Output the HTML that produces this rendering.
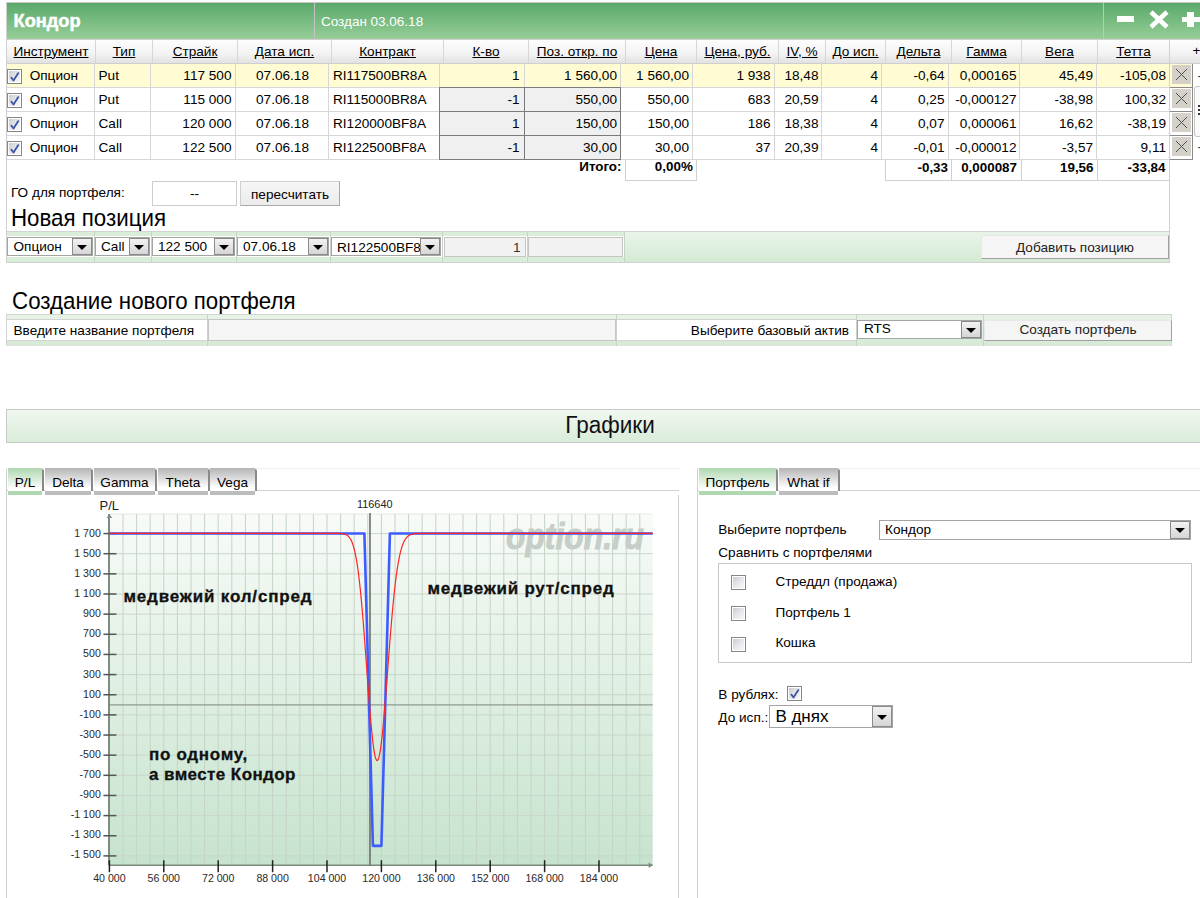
<!DOCTYPE html>
<html><head><meta charset="utf-8"><style>
html,body{margin:0;padding:0;background:#fff;width:1200px;height:898px;overflow:hidden}
body{position:relative;font-family:"Liberation Sans",sans-serif;color:#000}
.t{position:absolute;white-space:nowrap}
.b{position:absolute}
.cb{border:1px solid #858686;background:#fff;}
.cbi{position:absolute;left:1px;top:1px;width:11px;height:11px;background:linear-gradient(135deg,#c9ccd3,#e6e7ea 50%,#f7f7f7)}
.ddb{border:1px solid #8a8a8a;background:linear-gradient(#f2f2f2,#d6d6d6)}
.tri{position:absolute;left:50%;top:50%;margin-left:-5px;margin-top:-2px;width:0;height:0;border-left:5px solid transparent;border-right:5px solid transparent;border-top:5px solid #000}
svg text{font-family:"Liberation Sans",sans-serif}
</style></head><body>
<div class="b" style="left:6px;top:2px;width:1194px;height:1px;background:#c8c8c8"></div>
<div class="b" style="left:6px;top:2px;width:1px;height:261px;background:#d0d0d0"></div>
<div class="b" style="left:7px;top:3px;width:1193px;height:36px;background:linear-gradient(#5aa96b,#96ce97)"></div>
<div class="b" style="left:314px;top:3px;width:1px;height:36px;background:#c4c4c4"></div>
<div class="b" style="left:1103px;top:3px;width:1px;height:36px;background:#c4c4c4"></div>
<div class="t" style="left:13.6px;top:11.19px;font-size:18.2px;line-height:20px;font-weight:bold;color:#fff;-webkit-text-stroke:0.5px #fff">Кондор</div>
<div class="t" style="left:321px;top:11.72px;font-size:13.5px;line-height:20px;font-weight:normal;color:#fff;">Создан 03.06.18</div>
<div class="b" style="left:1117px;top:16px;width:17px;height:6px;background:#fff"></div>
<svg class="b" style="left:1148px;top:9px" width="22" height="21" viewBox="0 0 22 21"><path d="M3 3 L19 18 M19 3 L3 18" stroke="#fff" stroke-width="4.6"/></svg>
<div class="b" style="left:1182px;top:16.5px;width:18px;height:5.5px;background:#fff"></div>
<div class="b" style="left:1187px;top:12px;width:7px;height:15px;background:#fff"></div>
<div class="b" style="left:7px;top:39px;width:1193px;height:24px;background:linear-gradient(#fefefe,#f3f3f3 60%,#e2e2e2)"></div>
<div class="b" style="left:7px;top:39px;width:1193px;height:1px;background:#d2ced2"></div>
<div class="b" style="left:7px;top:63px;width:1193px;height:1px;background:#cfcfcf"></div>
<div class="b" style="left:95px;top:39px;width:1px;height:24px;background:#d6d6d6"></div>
<div class="b" style="left:152px;top:39px;width:1px;height:24px;background:#d6d6d6"></div>
<div class="b" style="left:237px;top:39px;width:1px;height:24px;background:#d6d6d6"></div>
<div class="b" style="left:331px;top:39px;width:1px;height:24px;background:#d6d6d6"></div>
<div class="b" style="left:443px;top:39px;width:1px;height:24px;background:#d6d6d6"></div>
<div class="b" style="left:528px;top:39px;width:1px;height:24px;background:#d6d6d6"></div>
<div class="b" style="left:625px;top:39px;width:1px;height:24px;background:#d6d6d6"></div>
<div class="b" style="left:696px;top:39px;width:1px;height:24px;background:#d6d6d6"></div>
<div class="b" style="left:778px;top:39px;width:1px;height:24px;background:#d6d6d6"></div>
<div class="b" style="left:825px;top:39px;width:1px;height:24px;background:#d6d6d6"></div>
<div class="b" style="left:885px;top:39px;width:1px;height:24px;background:#d6d6d6"></div>
<div class="b" style="left:951px;top:39px;width:1px;height:24px;background:#d6d6d6"></div>
<div class="b" style="left:1021px;top:39px;width:1px;height:24px;background:#d6d6d6"></div>
<div class="b" style="left:1097px;top:39px;width:1px;height:24px;background:#d6d6d6"></div>
<div class="b" style="left:1169px;top:39px;width:1px;height:24px;background:#d6d6d6"></div>
<div class="t" style="left:-249.0px;width:600px;text-align:center;top:41.79px;font-size:13.6px;line-height:20px;font-weight:normal;color:#000;text-decoration:underline;text-underline-offset:0.6px">Инструмент</div>
<div class="t" style="left:-176.0px;width:600px;text-align:center;top:41.79px;font-size:13.6px;line-height:20px;font-weight:normal;color:#000;text-decoration:underline;text-underline-offset:0.6px">Тип</div>
<div class="t" style="left:-105.0px;width:600px;text-align:center;top:41.79px;font-size:13.6px;line-height:20px;font-weight:normal;color:#000;text-decoration:underline;text-underline-offset:0.6px">Страйк</div>
<div class="t" style="left:-15.5px;width:600px;text-align:center;top:41.79px;font-size:13.6px;line-height:20px;font-weight:normal;color:#000;text-decoration:underline;text-underline-offset:0.6px">Дата исп.</div>
<div class="t" style="left:87.5px;width:600px;text-align:center;top:41.79px;font-size:13.6px;line-height:20px;font-weight:normal;color:#000;text-decoration:underline;text-underline-offset:0.6px">Контракт</div>
<div class="t" style="left:186.0px;width:600px;text-align:center;top:41.79px;font-size:13.6px;line-height:20px;font-weight:normal;color:#000;text-decoration:underline;text-underline-offset:0.6px">К-во</div>
<div class="t" style="left:277.0px;width:600px;text-align:center;top:41.79px;font-size:13.6px;line-height:20px;font-weight:normal;color:#000;text-decoration:underline;text-underline-offset:0.6px">Поз. откр. по</div>
<div class="t" style="left:361.0px;width:600px;text-align:center;top:41.79px;font-size:13.6px;line-height:20px;font-weight:normal;color:#000;text-decoration:underline;text-underline-offset:0.6px">Цена</div>
<div class="t" style="left:437.5px;width:600px;text-align:center;top:41.79px;font-size:13.6px;line-height:20px;font-weight:normal;color:#000;text-decoration:underline;text-underline-offset:0.6px">Цена, руб.</div>
<div class="t" style="left:502.0px;width:600px;text-align:center;top:41.79px;font-size:13.6px;line-height:20px;font-weight:normal;color:#000;text-decoration:underline;text-underline-offset:0.6px">IV, %</div>
<div class="t" style="left:555.5px;width:600px;text-align:center;top:41.79px;font-size:13.6px;line-height:20px;font-weight:normal;color:#000;text-decoration:underline;text-underline-offset:0.6px">До исп.</div>
<div class="t" style="left:618.5px;width:600px;text-align:center;top:41.79px;font-size:13.6px;line-height:20px;font-weight:normal;color:#000;text-decoration:underline;text-underline-offset:0.6px">Дельта</div>
<div class="t" style="left:686.5px;width:600px;text-align:center;top:41.79px;font-size:13.6px;line-height:20px;font-weight:normal;color:#000;text-decoration:underline;text-underline-offset:0.6px">Гамма</div>
<div class="t" style="left:759.5px;width:600px;text-align:center;top:41.79px;font-size:13.6px;line-height:20px;font-weight:normal;color:#000;text-decoration:underline;text-underline-offset:0.6px">Вега</div>
<div class="t" style="left:833.5px;width:600px;text-align:center;top:41.79px;font-size:13.6px;line-height:20px;font-weight:normal;color:#000;text-decoration:underline;text-underline-offset:0.6px">Тетта</div>
<div class="t" style="left:1192.5px;top:41.29px;font-size:13.6px;line-height:20px;font-weight:normal;color:#000;">+</div>
<div class="b" style="left:7px;top:64px;width:1185px;height:23px;background:#fffbd3"></div>
<div class="b cb" style="left:7px;top:69px;width:13px;height:13px"><div class="cbi"></div><svg width="15" height="15" viewBox="0 0 15 15" style="position:absolute;left:-1px;top:-1px"><path d="M4.4 8.6 L6.5 11.5 L11.3 4.1" stroke="#3d56a3" stroke-width="1.8" fill="none" stroke-linecap="round" stroke-linejoin="round"/></svg></div>
<div class="t" style="left:29.7px;top:65.89px;font-size:13.6px;line-height:20px;font-weight:normal;color:#000;">Опцион</div>
<div class="t" style="left:98.5px;top:65.89px;font-size:13.6px;line-height:20px;font-weight:normal;color:#000;">Put</div>
<div class="t" style="right:968.5px;text-align:right;top:65.89px;font-size:13.6px;line-height:20px;font-weight:normal;color:#000;">117 500</div>
<div class="t" style="left:-17.5px;width:600px;text-align:center;top:65.89px;font-size:13.6px;line-height:20px;font-weight:normal;color:#000;">07.06.18</div>
<div class="t" style="left:333px;top:65.89px;font-size:13.6px;line-height:20px;font-weight:normal;color:#000;">RI117500BR8A</div>
<div class="t" style="right:680.5px;text-align:right;top:65.89px;font-size:13.6px;line-height:20px;font-weight:normal;color:#000;">1</div>
<div class="t" style="right:583px;text-align:right;top:65.89px;font-size:13.6px;line-height:20px;font-weight:normal;color:#000;">1 560,00</div>
<div class="t" style="right:511px;text-align:right;top:65.89px;font-size:13.6px;line-height:20px;font-weight:normal;color:#000;">1 560,00</div>
<div class="t" style="right:429.5px;text-align:right;top:65.89px;font-size:13.6px;line-height:20px;font-weight:normal;color:#000;">1 938</div>
<div class="t" style="right:381.5px;text-align:right;top:65.89px;font-size:13.6px;line-height:20px;font-weight:normal;color:#000;">18,48</div>
<div class="t" style="right:322px;text-align:right;top:65.89px;font-size:13.6px;line-height:20px;font-weight:normal;color:#000;">4</div>
<div class="t" style="right:255.5px;text-align:right;top:65.89px;font-size:13.6px;line-height:20px;font-weight:normal;color:#000;">-0,64</div>
<div class="t" style="right:183.5px;text-align:right;top:65.89px;font-size:13.6px;line-height:20px;font-weight:normal;color:#000;">0,000165</div>
<div class="t" style="right:107px;text-align:right;top:65.89px;font-size:13.6px;line-height:20px;font-weight:normal;color:#000;">45,49</div>
<div class="t" style="right:34px;text-align:right;top:65.89px;font-size:13.6px;line-height:20px;font-weight:normal;color:#000;">-105,08</div>
<div class="b" style="left:1172px;top:65px;width:19px;height:19px;background:#d5d1c9"></div>
<svg class="b" style="left:1172px;top:65px" width="19" height="19" viewBox="0 0 19 19"><path d="M4 4 L15 15 M15 4 L4 15" stroke="#505050" stroke-width="1"/></svg>
<div class="b" style="left:7px;top:88px;width:1185px;height:23px;background:#fff"></div>
<div class="b" style="left:439px;top:87px;width:182px;height:25px;background:#f0f0f0"></div>
<div class="b cb" style="left:7px;top:93px;width:13px;height:13px"><div class="cbi"></div><svg width="15" height="15" viewBox="0 0 15 15" style="position:absolute;left:-1px;top:-1px"><path d="M4.4 8.6 L6.5 11.5 L11.3 4.1" stroke="#3d56a3" stroke-width="1.8" fill="none" stroke-linecap="round" stroke-linejoin="round"/></svg></div>
<div class="t" style="left:29.7px;top:89.89px;font-size:13.6px;line-height:20px;font-weight:normal;color:#000;">Опцион</div>
<div class="t" style="left:98.5px;top:89.89px;font-size:13.6px;line-height:20px;font-weight:normal;color:#000;">Put</div>
<div class="t" style="right:968.5px;text-align:right;top:89.89px;font-size:13.6px;line-height:20px;font-weight:normal;color:#000;">115 000</div>
<div class="t" style="left:-17.5px;width:600px;text-align:center;top:89.89px;font-size:13.6px;line-height:20px;font-weight:normal;color:#000;">07.06.18</div>
<div class="t" style="left:333px;top:89.89px;font-size:13.6px;line-height:20px;font-weight:normal;color:#000;">RI115000BR8A</div>
<div class="t" style="right:680.5px;text-align:right;top:89.89px;font-size:13.6px;line-height:20px;font-weight:normal;color:#000;">-1</div>
<div class="t" style="right:583px;text-align:right;top:89.89px;font-size:13.6px;line-height:20px;font-weight:normal;color:#000;">550,00</div>
<div class="t" style="right:511px;text-align:right;top:89.89px;font-size:13.6px;line-height:20px;font-weight:normal;color:#000;">550,00</div>
<div class="t" style="right:429.5px;text-align:right;top:89.89px;font-size:13.6px;line-height:20px;font-weight:normal;color:#000;">683</div>
<div class="t" style="right:381.5px;text-align:right;top:89.89px;font-size:13.6px;line-height:20px;font-weight:normal;color:#000;">20,59</div>
<div class="t" style="right:322px;text-align:right;top:89.89px;font-size:13.6px;line-height:20px;font-weight:normal;color:#000;">4</div>
<div class="t" style="right:255.5px;text-align:right;top:89.89px;font-size:13.6px;line-height:20px;font-weight:normal;color:#000;">0,25</div>
<div class="t" style="right:183.5px;text-align:right;top:89.89px;font-size:13.6px;line-height:20px;font-weight:normal;color:#000;">-0,000127</div>
<div class="t" style="right:107px;text-align:right;top:89.89px;font-size:13.6px;line-height:20px;font-weight:normal;color:#000;">-38,98</div>
<div class="t" style="right:34px;text-align:right;top:89.89px;font-size:13.6px;line-height:20px;font-weight:normal;color:#000;">100,32</div>
<div class="b" style="left:1172px;top:89px;width:19px;height:19px;background:#d5d1c9"></div>
<svg class="b" style="left:1172px;top:89px" width="19" height="19" viewBox="0 0 19 19"><path d="M4 4 L15 15 M15 4 L4 15" stroke="#505050" stroke-width="1"/></svg>
<div class="b" style="left:7px;top:112px;width:1185px;height:23px;background:#fff"></div>
<div class="b" style="left:439px;top:111px;width:182px;height:25px;background:#f0f0f0"></div>
<div class="b cb" style="left:7px;top:117px;width:13px;height:13px"><div class="cbi"></div><svg width="15" height="15" viewBox="0 0 15 15" style="position:absolute;left:-1px;top:-1px"><path d="M4.4 8.6 L6.5 11.5 L11.3 4.1" stroke="#3d56a3" stroke-width="1.8" fill="none" stroke-linecap="round" stroke-linejoin="round"/></svg></div>
<div class="t" style="left:29.7px;top:113.89px;font-size:13.6px;line-height:20px;font-weight:normal;color:#000;">Опцион</div>
<div class="t" style="left:98.5px;top:113.89px;font-size:13.6px;line-height:20px;font-weight:normal;color:#000;">Call</div>
<div class="t" style="right:968.5px;text-align:right;top:113.89px;font-size:13.6px;line-height:20px;font-weight:normal;color:#000;">120 000</div>
<div class="t" style="left:-17.5px;width:600px;text-align:center;top:113.89px;font-size:13.6px;line-height:20px;font-weight:normal;color:#000;">07.06.18</div>
<div class="t" style="left:333px;top:113.89px;font-size:13.6px;line-height:20px;font-weight:normal;color:#000;">RI120000BF8A</div>
<div class="t" style="right:680.5px;text-align:right;top:113.89px;font-size:13.6px;line-height:20px;font-weight:normal;color:#000;">1</div>
<div class="t" style="right:583px;text-align:right;top:113.89px;font-size:13.6px;line-height:20px;font-weight:normal;color:#000;">150,00</div>
<div class="t" style="right:511px;text-align:right;top:113.89px;font-size:13.6px;line-height:20px;font-weight:normal;color:#000;">150,00</div>
<div class="t" style="right:429.5px;text-align:right;top:113.89px;font-size:13.6px;line-height:20px;font-weight:normal;color:#000;">186</div>
<div class="t" style="right:381.5px;text-align:right;top:113.89px;font-size:13.6px;line-height:20px;font-weight:normal;color:#000;">18,38</div>
<div class="t" style="right:322px;text-align:right;top:113.89px;font-size:13.6px;line-height:20px;font-weight:normal;color:#000;">4</div>
<div class="t" style="right:255.5px;text-align:right;top:113.89px;font-size:13.6px;line-height:20px;font-weight:normal;color:#000;">0,07</div>
<div class="t" style="right:183.5px;text-align:right;top:113.89px;font-size:13.6px;line-height:20px;font-weight:normal;color:#000;">0,000061</div>
<div class="t" style="right:107px;text-align:right;top:113.89px;font-size:13.6px;line-height:20px;font-weight:normal;color:#000;">16,62</div>
<div class="t" style="right:34px;text-align:right;top:113.89px;font-size:13.6px;line-height:20px;font-weight:normal;color:#000;">-38,19</div>
<div class="b" style="left:1172px;top:113px;width:19px;height:19px;background:#d5d1c9"></div>
<svg class="b" style="left:1172px;top:113px" width="19" height="19" viewBox="0 0 19 19"><path d="M4 4 L15 15 M15 4 L4 15" stroke="#505050" stroke-width="1"/></svg>
<div class="b" style="left:7px;top:136px;width:1185px;height:23px;background:#fff"></div>
<div class="b" style="left:439px;top:135px;width:182px;height:25px;background:#f0f0f0"></div>
<div class="b cb" style="left:7px;top:141px;width:13px;height:13px"><div class="cbi"></div><svg width="15" height="15" viewBox="0 0 15 15" style="position:absolute;left:-1px;top:-1px"><path d="M4.4 8.6 L6.5 11.5 L11.3 4.1" stroke="#3d56a3" stroke-width="1.8" fill="none" stroke-linecap="round" stroke-linejoin="round"/></svg></div>
<div class="t" style="left:29.7px;top:137.89px;font-size:13.6px;line-height:20px;font-weight:normal;color:#000;">Опцион</div>
<div class="t" style="left:98.5px;top:137.89px;font-size:13.6px;line-height:20px;font-weight:normal;color:#000;">Call</div>
<div class="t" style="right:968.5px;text-align:right;top:137.89px;font-size:13.6px;line-height:20px;font-weight:normal;color:#000;">122 500</div>
<div class="t" style="left:-17.5px;width:600px;text-align:center;top:137.89px;font-size:13.6px;line-height:20px;font-weight:normal;color:#000;">07.06.18</div>
<div class="t" style="left:333px;top:137.89px;font-size:13.6px;line-height:20px;font-weight:normal;color:#000;">RI122500BF8A</div>
<div class="t" style="right:680.5px;text-align:right;top:137.89px;font-size:13.6px;line-height:20px;font-weight:normal;color:#000;">-1</div>
<div class="t" style="right:583px;text-align:right;top:137.89px;font-size:13.6px;line-height:20px;font-weight:normal;color:#000;">30,00</div>
<div class="t" style="right:511px;text-align:right;top:137.89px;font-size:13.6px;line-height:20px;font-weight:normal;color:#000;">30,00</div>
<div class="t" style="right:429.5px;text-align:right;top:137.89px;font-size:13.6px;line-height:20px;font-weight:normal;color:#000;">37</div>
<div class="t" style="right:381.5px;text-align:right;top:137.89px;font-size:13.6px;line-height:20px;font-weight:normal;color:#000;">20,39</div>
<div class="t" style="right:322px;text-align:right;top:137.89px;font-size:13.6px;line-height:20px;font-weight:normal;color:#000;">4</div>
<div class="t" style="right:255.5px;text-align:right;top:137.89px;font-size:13.6px;line-height:20px;font-weight:normal;color:#000;">-0,01</div>
<div class="t" style="right:183.5px;text-align:right;top:137.89px;font-size:13.6px;line-height:20px;font-weight:normal;color:#000;">-0,000012</div>
<div class="t" style="right:107px;text-align:right;top:137.89px;font-size:13.6px;line-height:20px;font-weight:normal;color:#000;">-3,57</div>
<div class="t" style="right:34px;text-align:right;top:137.89px;font-size:13.6px;line-height:20px;font-weight:normal;color:#000;">9,11</div>
<div class="b" style="left:1172px;top:137px;width:19px;height:19px;background:#d5d1c9"></div>
<svg class="b" style="left:1172px;top:137px" width="19" height="19" viewBox="0 0 19 19"><path d="M4 4 L15 15 M15 4 L4 15" stroke="#505050" stroke-width="1"/></svg>
<div class="b" style="left:7px;top:87px;width:1185px;height:1px;background:#d6d6d6"></div>
<div class="b" style="left:7px;top:111px;width:1185px;height:1px;background:#d6d6d6"></div>
<div class="b" style="left:7px;top:135px;width:1185px;height:1px;background:#d6d6d6"></div>
<div class="b" style="left:7px;top:159px;width:1185px;height:1px;background:#d6d6d6"></div>
<div class="b" style="left:94px;top:64px;width:1px;height:95px;background:#d6d6d6"></div>
<div class="b" style="left:150px;top:64px;width:1px;height:95px;background:#d6d6d6"></div>
<div class="b" style="left:235px;top:64px;width:1px;height:95px;background:#d6d6d6"></div>
<div class="b" style="left:328px;top:64px;width:1px;height:95px;background:#d6d6d6"></div>
<div class="b" style="left:439px;top:64px;width:1px;height:95px;background:#d6d6d6"></div>
<div class="b" style="left:524px;top:64px;width:1px;height:95px;background:#d6d6d6"></div>
<div class="b" style="left:620px;top:64px;width:1px;height:95px;background:#d6d6d6"></div>
<div class="b" style="left:692px;top:64px;width:1px;height:95px;background:#d6d6d6"></div>
<div class="b" style="left:774px;top:64px;width:1px;height:95px;background:#d6d6d6"></div>
<div class="b" style="left:821px;top:64px;width:1px;height:95px;background:#d6d6d6"></div>
<div class="b" style="left:881px;top:64px;width:1px;height:95px;background:#d6d6d6"></div>
<div class="b" style="left:948px;top:64px;width:1px;height:95px;background:#d6d6d6"></div>
<div class="b" style="left:1019px;top:64px;width:1px;height:95px;background:#d6d6d6"></div>
<div class="b" style="left:1096px;top:64px;width:1px;height:95px;background:#d6d6d6"></div>
<div class="b" style="left:1169px;top:64px;width:1px;height:95px;background:#d6d6d6"></div>
<div class="b" style="left:1192px;top:64px;width:1px;height:95px;background:#d6d6d6"></div>
<div class="b" style="left:439px;top:87px;width:182px;height:1px;background:#7a7a7a"></div>
<div class="b" style="left:439px;top:111px;width:182px;height:1px;background:#7a7a7a"></div>
<div class="b" style="left:439px;top:135px;width:182px;height:1px;background:#7a7a7a"></div>
<div class="b" style="left:439px;top:159px;width:182px;height:1px;background:#7a7a7a"></div>
<div class="b" style="left:439px;top:87px;width:1px;height:73px;background:#7a7a7a"></div>
<div class="b" style="left:524px;top:87px;width:1px;height:73px;background:#7a7a7a"></div>
<div class="b" style="left:620px;top:87px;width:1px;height:73px;background:#7a7a7a"></div>
<div class="b" style="left:1192px;top:64px;width:1px;height:96px;background:#8a8a8a"></div>
<div class="b" style="left:1169px;top:87px;width:24px;height:1px;background:#8a8a8a"></div>
<div class="b" style="left:1169px;top:111px;width:24px;height:1px;background:#8a8a8a"></div>
<div class="b" style="left:1169px;top:135px;width:24px;height:1px;background:#8a8a8a"></div>
<div class="b" style="left:1169px;top:159px;width:24px;height:1px;background:#8a8a8a"></div>
<div class="t" style="left:1197.5px;top:66.09px;font-size:13.6px;line-height:20px;font-weight:normal;color:#333;">-</div>
<div class="b" style="left:1194px;top:86px;width:8px;height:51px;border:1px solid #c4c4c4;border-radius:3px;background:#fafafa;box-sizing:border-box"></div>
<div class="b" style="left:1198px;top:105px;width:2px;height:2px;background:#333"></div>
<div class="b" style="left:1198px;top:109px;width:2px;height:2px;background:#333"></div>
<div class="b" style="left:1198px;top:113px;width:2px;height:2px;background:#333"></div>
<div class="t" style="left:1197.5px;top:136.59px;font-size:13.6px;line-height:20px;font-weight:normal;color:#333;">-</div>
<div class="t" style="right:578.5px;text-align:right;top:157.36px;font-size:13.4px;line-height:20px;font-weight:bold;color:#000;">Итого:</div>
<div class="b" style="left:625px;top:159px;width:72px;height:22px;border:1px solid #d0d0d0;border-top:none;box-sizing:border-box"></div>
<div class="t" style="right:507.20000000000005px;text-align:right;top:157.36px;font-size:13.4px;line-height:20px;font-weight:bold;color:#000;">0,00%</div>
<div class="b" style="left:885px;top:159px;width:285px;height:22px;border:1px solid #d0d0d0;border-top:none;box-sizing:border-box"></div>
<div class="b" style="left:951px;top:159px;width:1px;height:22px;background:#d0d0d0"></div>
<div class="b" style="left:1021px;top:159px;width:1px;height:22px;background:#d0d0d0"></div>
<div class="b" style="left:1097px;top:159px;width:1px;height:22px;background:#d0d0d0"></div>
<div class="t" style="right:252px;text-align:right;top:157.86px;font-size:13.4px;line-height:20px;font-weight:bold;color:#000;">-0,33</div>
<div class="t" style="right:183px;text-align:right;top:157.86px;font-size:13.4px;line-height:20px;font-weight:bold;color:#000;">0,000087</div>
<div class="t" style="right:106.5px;text-align:right;top:157.86px;font-size:13.4px;line-height:20px;font-weight:bold;color:#000;">19,56</div>
<div class="t" style="right:34.5px;text-align:right;top:157.86px;font-size:13.4px;line-height:20px;font-weight:bold;color:#000;">-33,84</div>
<div class="b" style="left:1169px;top:39px;width:1px;height:224px;background:#d0d0d0"></div>
<div class="t" style="left:11px;top:183.29px;font-size:13.6px;line-height:20px;font-weight:normal;color:#000;">ГО для портфеля:</div>
<div class="b" style="left:152px;top:181px;width:85px;height:25px;border:1px solid #cdcdcd;background:#fff;box-sizing:border-box"></div>
<div class="t" style="left:-105.5px;width:600px;text-align:center;top:183.99px;font-size:13.6px;line-height:20px;font-weight:normal;color:#000;">--</div>
<div class="b" style="left:240px;top:181px;width:100px;height:25px;border:1px solid #cfcfcf;border-right-color:#a8a8a8;border-bottom-color:#a8a8a8;background:linear-gradient(#f6f6f6,#ececec);box-sizing:border-box"></div>
<div class="t" style="left:-10px;width:600px;text-align:center;top:185.29px;font-size:13.6px;line-height:20px;font-weight:normal;color:#000;">пересчитать</div>
<div class="t" style="left:11px;top:209.27px;font-size:22.3px;line-height:20px;font-weight:normal;color:#000;transform:scaleY(1.07);transform-origin:0 17.7px">Новая позиция</div>
<div class="b" style="left:7px;top:231px;width:1162px;height:31px;background:#d9edd9"></div>
<div class="b" style="left:7px;top:231px;width:1162px;height:1px;background:#d2d4d2"></div>
<div class="b" style="left:6px;top:262px;width:1163px;height:1px;background:#d0d0d0"></div>
<div class="b" style="left:7px;top:236px;width:617px;height:21px;background:#fff"></div>
<div class="b" style="left:94px;top:231px;width:1px;height:31px;background:#c8d4c8"></div>
<div class="b" style="left:151px;top:231px;width:1px;height:31px;background:#c8d4c8"></div>
<div class="b" style="left:236px;top:231px;width:1px;height:31px;background:#c8d4c8"></div>
<div class="b" style="left:330px;top:231px;width:1px;height:31px;background:#c8d4c8"></div>
<div class="b" style="left:442px;top:231px;width:1px;height:31px;background:#c8d4c8"></div>
<div class="b" style="left:527px;top:231px;width:1px;height:31px;background:#c8d4c8"></div>
<div class="b" style="left:624px;top:231px;width:1px;height:31px;background:#c8d4c8"></div>
<div class="b" style="left:625px;top:232px;width:544px;height:30px;background:linear-gradient(#e9f4e9,#d4ead4)"></div>
<div class="b" style="left:7px;top:237px;width:86px;height:19px;background:#fff;border:1px solid #a5a5a5;box-sizing:border-box"></div>
<div class="b ddb" style="left:72px;top:238px;width:18px;height:15px"><div class="tri"></div></div>
<div class="t" style="left:13.5px;top:237.29px;font-size:13.6px;line-height:20px;font-weight:normal;color:#000;">Опцион</div>
<div class="b" style="left:95px;top:237px;width:55px;height:19px;background:#fff;border:1px solid #a5a5a5;box-sizing:border-box"></div>
<div class="b ddb" style="left:129px;top:238px;width:18px;height:15px"><div class="tri"></div></div>
<div class="t" style="left:101px;top:237.29px;font-size:13.6px;line-height:20px;font-weight:normal;color:#000;">Call</div>
<div class="b" style="left:152px;top:237px;width:83px;height:19px;background:#fff;border:1px solid #a5a5a5;box-sizing:border-box"></div>
<div class="b ddb" style="left:214px;top:238px;width:18px;height:15px"><div class="tri"></div></div>
<div class="t" style="left:158px;top:237.29px;font-size:13.6px;line-height:20px;font-weight:normal;color:#000;">122 500</div>
<div class="b" style="left:237px;top:237px;width:92px;height:19px;background:#fff;border:1px solid #a5a5a5;box-sizing:border-box"></div>
<div class="b ddb" style="left:308px;top:238px;width:18px;height:15px"><div class="tri"></div></div>
<div class="t" style="left:243px;top:237.29px;font-size:13.6px;line-height:20px;font-weight:normal;color:#000;">07.06.18</div>
<div class="b" style="left:331px;top:237px;width:90px;height:19px;overflow:hidden">
</div>
<div class="b" style="left:331px;top:237px;width:110px;height:19px;background:#fff;border:1px solid #a5a5a5;box-sizing:border-box"></div>
<div class="b ddb" style="left:420px;top:238px;width:18px;height:15px"><div class="tri"></div></div>
<div class="t" style="left:337px;top:238px;width:83px;overflow:hidden;font-size:13.6px;line-height:19px">RI122500BF8A</div>
<div class="b" style="left:421px;top:238px;width:18px;height:15px;"></div>
<div class="b ddb" style="left:420px;top:238px;width:18px;height:15px"><div class="tri"></div></div>
<div class="b" style="left:444px;top:237px;width:82px;height:20px;background:#f2f2f2;border:1px solid #c4c4c4;box-sizing:border-box"></div>
<div class="t" style="right:679.5px;text-align:right;top:237.79px;font-size:13.6px;line-height:20px;font-weight:normal;color:#333;">1</div>
<div class="b" style="left:528px;top:237px;width:95px;height:20px;background:#f2f2f2;border:1px solid #c4c4c4;box-sizing:border-box"></div>
<div class="b" style="left:981px;top:235px;width:188px;height:24px;background:#f5f5f5;border:1px solid #e8e8e8;border-right-color:#a0a0a0;border-bottom-color:#a0a0a0;box-sizing:border-box"></div>
<div class="t" style="left:775px;width:600px;text-align:center;top:238.29px;font-size:13.6px;line-height:20px;font-weight:normal;color:#222;">Добавить позицию</div>
<div class="t" style="left:12.1px;top:291.77px;font-size:22.3px;line-height:20px;font-weight:normal;color:#000;transform:scaleY(1.07);transform-origin:0 17.7px">Создание нового портфеля</div>
<div class="b" style="left:6px;top:314px;width:1166px;height:32px;background:linear-gradient(#e8f3e8,#d6ead6);border:1px solid #d2d4d2;border-bottom-color:#e0e4e0;box-sizing:border-box"></div>
<div class="b" style="left:7px;top:319px;width:200px;height:22px;background:#fff;border-top:1px solid #d4d4d4;border-bottom:1px solid #d4d4d4;box-sizing:border-box"></div>
<div class="b" style="left:208px;top:319px;width:408px;height:22px;background:#f5f5f5;border:1px solid #c6c6c6;box-sizing:border-box"></div>
<div class="b" style="left:617px;top:319px;width:239px;height:22px;background:#fff;border-top:1px solid #d4d4d4;border-bottom:1px solid #d4d4d4;box-sizing:border-box"></div>
<div class="b" style="left:207px;top:314px;width:1px;height:32px;background:#c8d4c8"></div>
<div class="b" style="left:616px;top:314px;width:1px;height:32px;background:#c8d4c8"></div>
<div class="b" style="left:856px;top:314px;width:1px;height:32px;background:#c8d4c8"></div>
<div class="b" style="left:983px;top:314px;width:1px;height:32px;background:#c8d4c8"></div>
<div class="t" style="left:13.5px;top:321.29px;font-size:13.6px;line-height:20px;font-weight:normal;color:#000;">Введите название портфеля</div>
<div class="t" style="right:351px;text-align:right;top:321.29px;font-size:13.6px;line-height:20px;font-weight:normal;color:#000;">Выберите базовый актив</div>
<div class="b" style="left:857px;top:320px;width:125px;height:19px;background:#fff;border:1px solid #a5a5a5;box-sizing:border-box"></div>
<div class="b ddb" style="left:961px;top:321px;width:18px;height:15px"><div class="tri"></div></div>
<div class="t" style="left:864px;top:319.29px;font-size:13.6px;line-height:20px;font-weight:normal;color:#000;">RTS</div>
<div class="b" style="left:984px;top:320px;width:188px;height:21px;background:#f5f5f5;border:1px solid #e8e8e8;border-right-color:#a0a0a0;border-bottom-color:#a0a0a0;box-sizing:border-box"></div>
<div class="t" style="left:778px;width:600px;text-align:center;top:320.29px;font-size:13.6px;line-height:20px;font-weight:normal;color:#222;">Создать портфель</div>
<div class="b" style="left:6px;top:409px;width:1194px;height:34px;background:linear-gradient(#f1f8f1,#d9ecd9);border:1px solid #c8c8c8;border-right:none;box-sizing:border-box"></div>
<div class="t" style="left:310px;width:600px;text-align:center;top:415.70px;font-size:22.5px;line-height:20px;font-weight:normal;color:#111;transform:scaleY(1.07);transform-origin:0 17.9px">Графики</div>
<div class="b" style="left:6px;top:468px;width:673px;height:1px;background:#f0f0f0"></div>
<div class="b" style="left:6px;top:490px;width:673px;height:1px;background:#d0d0d0"></div>
<div class="b" style="left:6px;top:469px;width:1px;height:429px;background:#d0d0d0"></div>
<div class="b" style="left:678px;top:495px;width:1px;height:403px;background:#d0d0d0"></div>
<div class="b" style="left:8px;top:468px;width:34px;height:23px;background:linear-gradient(#afd7b0,#ffffff 92%)"></div>
<div class="b" style="left:8px;top:491px;width:34px;height:4px;background:#b0d8b0"></div>
<div class="b" style="left:42px;top:469px;width:2px;height:22px;background:#8a8a8a;border-radius:0 2px 0 0"></div>
<div class="t" style="left:-275.0px;width:600px;text-align:center;top:473.29px;font-size:13.6px;line-height:20px;font-weight:normal;color:#000;">P/L</div>
<div class="b" style="left:45px;top:468px;width:46px;height:23px;background:linear-gradient(#b4b4b4,#ffffff 85%)"></div>
<div class="b" style="left:45px;top:491px;width:46px;height:4px;background:#bcbcbc"></div>
<div class="b" style="left:91px;top:469px;width:2px;height:22px;background:#8a8a8a;border-radius:0 2px 0 0"></div>
<div class="t" style="left:-232.0px;width:600px;text-align:center;top:473.29px;font-size:13.6px;line-height:20px;font-weight:normal;color:#000;">Delta</div>
<div class="b" style="left:94px;top:468px;width:61px;height:23px;background:linear-gradient(#b4b4b4,#ffffff 85%)"></div>
<div class="b" style="left:94px;top:491px;width:61px;height:4px;background:#bcbcbc"></div>
<div class="b" style="left:155px;top:469px;width:2px;height:22px;background:#8a8a8a;border-radius:0 2px 0 0"></div>
<div class="t" style="left:-175.5px;width:600px;text-align:center;top:473.29px;font-size:13.6px;line-height:20px;font-weight:normal;color:#000;">Gamma</div>
<div class="b" style="left:158px;top:468px;width:50px;height:23px;background:linear-gradient(#b4b4b4,#ffffff 85%)"></div>
<div class="b" style="left:158px;top:491px;width:50px;height:4px;background:#bcbcbc"></div>
<div class="b" style="left:208px;top:469px;width:2px;height:22px;background:#8a8a8a;border-radius:0 2px 0 0"></div>
<div class="t" style="left:-117.0px;width:600px;text-align:center;top:473.29px;font-size:13.6px;line-height:20px;font-weight:normal;color:#000;">Theta</div>
<div class="b" style="left:210px;top:468px;width:45px;height:23px;background:linear-gradient(#b4b4b4,#ffffff 85%)"></div>
<div class="b" style="left:210px;top:491px;width:45px;height:4px;background:#bcbcbc"></div>
<div class="b" style="left:255px;top:469px;width:2px;height:22px;background:#8a8a8a;border-radius:0 2px 0 0"></div>
<div class="t" style="left:-67.5px;width:600px;text-align:center;top:473.29px;font-size:13.6px;line-height:20px;font-weight:normal;color:#000;">Vega</div>
<div class="b" style="left:697px;top:468px;width:503px;height:1px;background:#f0f0f0"></div>
<div class="b" style="left:697px;top:490px;width:503px;height:1px;background:#d0d0d0"></div>
<div class="b" style="left:697px;top:469px;width:1px;height:429px;background:#d0d0d0"></div>
<div class="b" style="left:699px;top:468px;width:77px;height:23px;background:linear-gradient(#afd7b0,#ffffff 92%)"></div>
<div class="b" style="left:699px;top:491px;width:77px;height:4px;background:#b0d8b0"></div>
<div class="b" style="left:776px;top:469px;width:2px;height:22px;background:#8a8a8a;border-radius:0 2px 0 0"></div>
<div class="t" style="left:437.5px;width:600px;text-align:center;top:473.29px;font-size:13.6px;line-height:20px;font-weight:normal;color:#000;">Портфель</div>
<div class="b" style="left:779px;top:468px;width:59px;height:23px;background:linear-gradient(#b4b4b4,#ffffff 85%)"></div>
<div class="b" style="left:779px;top:491px;width:59px;height:4px;background:#bcbcbc"></div>
<div class="b" style="left:838px;top:469px;width:2px;height:22px;background:#8a8a8a;border-radius:0 2px 0 0"></div>
<div class="t" style="left:508.5px;width:600px;text-align:center;top:473.29px;font-size:13.6px;line-height:20px;font-weight:normal;color:#000;">What if</div>
<div class="t" style="left:718.3px;top:520.09px;font-size:13.6px;line-height:20px;font-weight:normal;color:#000;">Выберите портфель</div>
<div class="b" style="left:879px;top:520px;width:312px;height:20px;background:#fff;border:1px solid #a5a5a5;box-sizing:border-box"></div>
<div class="b ddb" style="left:1170px;top:521px;width:18px;height:16px"><div class="tri"></div></div>
<div class="t" style="left:885px;top:520.29px;font-size:13.6px;line-height:20px;font-weight:normal;color:#000;">Кондор</div>
<div class="t" style="left:718.3px;top:542.99px;font-size:13.6px;line-height:20px;font-weight:normal;color:#000;">Сравнить с портфелями</div>
<div class="b" style="left:718px;top:563px;width:474px;height:100px;border:1px solid #c8c8c8;box-sizing:border-box"></div>
<div class="b cb" style="left:731px;top:575px;width:13px;height:13px"><div class="cbi"></div></div>
<div class="t" style="left:775.4px;top:572.09px;font-size:13.6px;line-height:20px;font-weight:normal;color:#000;">Стреддл (продажа)</div>
<div class="b cb" style="left:731px;top:606px;width:13px;height:13px"><div class="cbi"></div></div>
<div class="t" style="left:775.4px;top:603.29px;font-size:13.6px;line-height:20px;font-weight:normal;color:#000;">Портфель 1</div>
<div class="b cb" style="left:731px;top:637px;width:13px;height:13px"><div class="cbi"></div></div>
<div class="t" style="left:775.4px;top:633.29px;font-size:13.6px;line-height:20px;font-weight:normal;color:#000;">Кошка</div>
<div class="t" style="left:718.3px;top:685.04px;font-size:13.6px;line-height:20px;font-weight:normal;color:#000;">В рублях:</div>
<div class="b cb" style="left:786.5px;top:686px;width:13px;height:13px"><div class="cbi"></div><svg width="15" height="15" viewBox="0 0 15 15" style="position:absolute;left:-1px;top:-1px"><path d="M4.4 8.6 L6.5 11.5 L11.3 4.1" stroke="#3d56a3" stroke-width="1.8" fill="none" stroke-linecap="round" stroke-linejoin="round"/></svg></div>
<div class="t" style="left:718.3px;top:707.99px;font-size:13.6px;line-height:20px;font-weight:normal;color:#000;">До исп.:</div>
<div class="b" style="left:769px;top:705px;width:124px;height:23px;background:#fff;border:1px solid #a5a5a5;box-sizing:border-box"></div>
<div class="b ddb" style="left:872px;top:706px;width:18px;height:19px"><div class="tri"></div></div>
<div class="t" style="left:775.4px;top:706.81px;font-size:17px;line-height:20px;font-weight:normal;color:#000;">В днях</div>
<svg class="b" style="left:0;top:0" width="1200" height="898" viewBox="0 0 1200 898">
<defs><linearGradient id="pg" x1="0" y1="0" x2="0" y2="1"><stop offset="0" stop-color="#f8fbf8"/><stop offset="1" stop-color="#c6e3cd"/></linearGradient></defs>
<rect x="109.4" y="514" width="543.3000000000001" height="351.20000000000005" fill="url(#pg)"/>
<line x1="109.4" y1="514" x2="652.7" y2="514" stroke="#e6ebe6" stroke-width="1"/>
<line x1="123.00" y1="514" x2="123.00" y2="865.2" stroke="#c5d3c7" stroke-width="1"/>
<line x1="136.60" y1="514" x2="136.60" y2="865.2" stroke="#c5d3c7" stroke-width="1"/>
<line x1="150.20" y1="514" x2="150.20" y2="865.2" stroke="#c5d3c7" stroke-width="1"/>
<line x1="163.80" y1="514" x2="163.80" y2="865.2" stroke="#c5d3c7" stroke-width="1"/>
<line x1="177.40" y1="514" x2="177.40" y2="865.2" stroke="#c5d3c7" stroke-width="1"/>
<line x1="191.00" y1="514" x2="191.00" y2="865.2" stroke="#c5d3c7" stroke-width="1"/>
<line x1="204.60" y1="514" x2="204.60" y2="865.2" stroke="#c5d3c7" stroke-width="1"/>
<line x1="218.20" y1="514" x2="218.20" y2="865.2" stroke="#c5d3c7" stroke-width="1"/>
<line x1="231.80" y1="514" x2="231.80" y2="865.2" stroke="#c5d3c7" stroke-width="1"/>
<line x1="245.40" y1="514" x2="245.40" y2="865.2" stroke="#c5d3c7" stroke-width="1"/>
<line x1="259.00" y1="514" x2="259.00" y2="865.2" stroke="#c5d3c7" stroke-width="1"/>
<line x1="272.60" y1="514" x2="272.60" y2="865.2" stroke="#c5d3c7" stroke-width="1"/>
<line x1="286.20" y1="514" x2="286.20" y2="865.2" stroke="#c5d3c7" stroke-width="1"/>
<line x1="299.80" y1="514" x2="299.80" y2="865.2" stroke="#c5d3c7" stroke-width="1"/>
<line x1="313.40" y1="514" x2="313.40" y2="865.2" stroke="#c5d3c7" stroke-width="1"/>
<line x1="327.00" y1="514" x2="327.00" y2="865.2" stroke="#c5d3c7" stroke-width="1"/>
<line x1="340.60" y1="514" x2="340.60" y2="865.2" stroke="#c5d3c7" stroke-width="1"/>
<line x1="354.20" y1="514" x2="354.20" y2="865.2" stroke="#c5d3c7" stroke-width="1"/>
<line x1="367.80" y1="514" x2="367.80" y2="865.2" stroke="#c5d3c7" stroke-width="1"/>
<line x1="381.40" y1="514" x2="381.40" y2="865.2" stroke="#c5d3c7" stroke-width="1"/>
<line x1="395.00" y1="514" x2="395.00" y2="865.2" stroke="#c5d3c7" stroke-width="1"/>
<line x1="408.60" y1="514" x2="408.60" y2="865.2" stroke="#c5d3c7" stroke-width="1"/>
<line x1="422.20" y1="514" x2="422.20" y2="865.2" stroke="#c5d3c7" stroke-width="1"/>
<line x1="435.80" y1="514" x2="435.80" y2="865.2" stroke="#c5d3c7" stroke-width="1"/>
<line x1="449.40" y1="514" x2="449.40" y2="865.2" stroke="#c5d3c7" stroke-width="1"/>
<line x1="463.00" y1="514" x2="463.00" y2="865.2" stroke="#c5d3c7" stroke-width="1"/>
<line x1="476.60" y1="514" x2="476.60" y2="865.2" stroke="#c5d3c7" stroke-width="1"/>
<line x1="490.20" y1="514" x2="490.20" y2="865.2" stroke="#c5d3c7" stroke-width="1"/>
<line x1="503.80" y1="514" x2="503.80" y2="865.2" stroke="#c5d3c7" stroke-width="1"/>
<line x1="517.40" y1="514" x2="517.40" y2="865.2" stroke="#c5d3c7" stroke-width="1"/>
<line x1="531.00" y1="514" x2="531.00" y2="865.2" stroke="#c5d3c7" stroke-width="1"/>
<line x1="544.60" y1="514" x2="544.60" y2="865.2" stroke="#c5d3c7" stroke-width="1"/>
<line x1="558.20" y1="514" x2="558.20" y2="865.2" stroke="#c5d3c7" stroke-width="1"/>
<line x1="571.80" y1="514" x2="571.80" y2="865.2" stroke="#c5d3c7" stroke-width="1"/>
<line x1="585.40" y1="514" x2="585.40" y2="865.2" stroke="#c5d3c7" stroke-width="1"/>
<line x1="599.00" y1="514" x2="599.00" y2="865.2" stroke="#c5d3c7" stroke-width="1"/>
<line x1="612.60" y1="514" x2="612.60" y2="865.2" stroke="#c5d3c7" stroke-width="1"/>
<line x1="626.20" y1="514" x2="626.20" y2="865.2" stroke="#c5d3c7" stroke-width="1"/>
<line x1="639.80" y1="514" x2="639.80" y2="865.2" stroke="#c5d3c7" stroke-width="1"/>
<line x1="109.4" y1="855.90" x2="652.7" y2="855.90" stroke="#c8d6ca" stroke-width="1"/>
<line x1="109.4" y1="835.76" x2="652.7" y2="835.76" stroke="#c8d6ca" stroke-width="1"/>
<line x1="109.4" y1="815.61" x2="652.7" y2="815.61" stroke="#c8d6ca" stroke-width="1"/>
<line x1="109.4" y1="795.47" x2="652.7" y2="795.47" stroke="#c8d6ca" stroke-width="1"/>
<line x1="109.4" y1="775.32" x2="652.7" y2="775.32" stroke="#c8d6ca" stroke-width="1"/>
<line x1="109.4" y1="755.17" x2="652.7" y2="755.17" stroke="#c8d6ca" stroke-width="1"/>
<line x1="109.4" y1="735.03" x2="652.7" y2="735.03" stroke="#c8d6ca" stroke-width="1"/>
<line x1="109.4" y1="714.88" x2="652.7" y2="714.88" stroke="#c8d6ca" stroke-width="1"/>
<line x1="109.4" y1="694.74" x2="652.7" y2="694.74" stroke="#c8d6ca" stroke-width="1"/>
<line x1="109.4" y1="674.59" x2="652.7" y2="674.59" stroke="#c8d6ca" stroke-width="1"/>
<line x1="109.4" y1="654.44" x2="652.7" y2="654.44" stroke="#c8d6ca" stroke-width="1"/>
<line x1="109.4" y1="634.30" x2="652.7" y2="634.30" stroke="#c8d6ca" stroke-width="1"/>
<line x1="109.4" y1="614.15" x2="652.7" y2="614.15" stroke="#c8d6ca" stroke-width="1"/>
<line x1="109.4" y1="594.01" x2="652.7" y2="594.01" stroke="#c8d6ca" stroke-width="1"/>
<line x1="109.4" y1="573.86" x2="652.7" y2="573.86" stroke="#c8d6ca" stroke-width="1"/>
<line x1="109.4" y1="553.71" x2="652.7" y2="553.71" stroke="#c8d6ca" stroke-width="1"/>
<line x1="109.4" y1="533.57" x2="652.7" y2="533.57" stroke="#c8d6ca" stroke-width="1"/>
<line x1="109.4" y1="704.81" x2="652.7" y2="704.81" stroke="#8f9a90" stroke-width="1.3"/>
<line x1="109" y1="514" x2="109" y2="865.2" stroke="#7f8c81" stroke-width="2"/>
<path d="M106.60000000000001,518 L109.4,514 L112.2,518" fill="#7c8a7e"/>
<line x1="109.4" y1="865.2" x2="652.7" y2="865.2" stroke="#7c8a7e" stroke-width="1.6"/>
<path d="M648.7,862.4000000000001 L652.7,865.2 L648.7,868.0" fill="#7c8a7e"/>
<line x1="103.4" y1="855.90" x2="116.4" y2="855.90" stroke="#555" stroke-width="1.5"/>
<text x="100.8" y="858.11" text-anchor="end" font-size="10.6" fill="#2a2a2a">-1 500</text>
<line x1="103.4" y1="835.76" x2="116.4" y2="835.76" stroke="#555" stroke-width="1.5"/>
<text x="100.8" y="838.04" text-anchor="end" font-size="10.6" fill="#2a2a2a">-1 300</text>
<line x1="103.4" y1="815.61" x2="116.4" y2="815.61" stroke="#555" stroke-width="1.5"/>
<text x="100.8" y="817.98" text-anchor="end" font-size="10.6" fill="#2a2a2a">-1 100</text>
<line x1="103.4" y1="795.47" x2="116.4" y2="795.47" stroke="#555" stroke-width="1.5"/>
<text x="100.8" y="797.91" text-anchor="end" font-size="10.6" fill="#2a2a2a">-900</text>
<line x1="103.4" y1="775.32" x2="116.4" y2="775.32" stroke="#555" stroke-width="1.5"/>
<text x="100.8" y="777.85" text-anchor="end" font-size="10.6" fill="#2a2a2a">-700</text>
<line x1="103.4" y1="755.17" x2="116.4" y2="755.17" stroke="#555" stroke-width="1.5"/>
<text x="100.8" y="757.78" text-anchor="end" font-size="10.6" fill="#2a2a2a">-500</text>
<line x1="103.4" y1="735.03" x2="116.4" y2="735.03" stroke="#555" stroke-width="1.5"/>
<text x="100.8" y="737.72" text-anchor="end" font-size="10.6" fill="#2a2a2a">-300</text>
<line x1="103.4" y1="714.88" x2="116.4" y2="714.88" stroke="#555" stroke-width="1.5"/>
<text x="100.8" y="717.65" text-anchor="end" font-size="10.6" fill="#2a2a2a">-100</text>
<line x1="103.4" y1="694.74" x2="116.4" y2="694.74" stroke="#555" stroke-width="1.5"/>
<text x="100.8" y="697.59" text-anchor="end" font-size="10.6" fill="#2a2a2a">100</text>
<line x1="103.4" y1="674.59" x2="116.4" y2="674.59" stroke="#555" stroke-width="1.5"/>
<text x="100.8" y="677.52" text-anchor="end" font-size="10.6" fill="#2a2a2a">300</text>
<line x1="103.4" y1="654.44" x2="116.4" y2="654.44" stroke="#555" stroke-width="1.5"/>
<text x="100.8" y="657.46" text-anchor="end" font-size="10.6" fill="#2a2a2a">500</text>
<line x1="103.4" y1="634.30" x2="116.4" y2="634.30" stroke="#555" stroke-width="1.5"/>
<text x="100.8" y="637.39" text-anchor="end" font-size="10.6" fill="#2a2a2a">700</text>
<line x1="103.4" y1="614.15" x2="116.4" y2="614.15" stroke="#555" stroke-width="1.5"/>
<text x="100.8" y="617.33" text-anchor="end" font-size="10.6" fill="#2a2a2a">900</text>
<line x1="103.4" y1="594.01" x2="116.4" y2="594.01" stroke="#555" stroke-width="1.5"/>
<text x="100.8" y="597.26" text-anchor="end" font-size="10.6" fill="#2a2a2a">1 100</text>
<line x1="103.4" y1="573.86" x2="116.4" y2="573.86" stroke="#555" stroke-width="1.5"/>
<text x="100.8" y="577.20" text-anchor="end" font-size="10.6" fill="#2a2a2a">1 300</text>
<line x1="103.4" y1="553.71" x2="116.4" y2="553.71" stroke="#555" stroke-width="1.5"/>
<text x="100.8" y="557.13" text-anchor="end" font-size="10.6" fill="#2a2a2a">1 500</text>
<line x1="103.4" y1="533.57" x2="116.4" y2="533.57" stroke="#555" stroke-width="1.5"/>
<text x="100.8" y="537.07" text-anchor="end" font-size="10.6" fill="#2a2a2a">1 700</text>
<line x1="109.40" y1="860.2" x2="109.40" y2="872.2" stroke="#222" stroke-width="1.5"/>
<text x="109.40" y="882" text-anchor="middle" font-size="10.6" fill="#2a2a2a">40 000</text>
<line x1="163.80" y1="860.2" x2="163.80" y2="872.2" stroke="#222" stroke-width="1.5"/>
<text x="163.80" y="882" text-anchor="middle" font-size="10.6" fill="#2a2a2a">56 000</text>
<line x1="218.20" y1="860.2" x2="218.20" y2="872.2" stroke="#222" stroke-width="1.5"/>
<text x="218.20" y="882" text-anchor="middle" font-size="10.6" fill="#2a2a2a">72 000</text>
<line x1="272.60" y1="860.2" x2="272.60" y2="872.2" stroke="#222" stroke-width="1.5"/>
<text x="272.60" y="882" text-anchor="middle" font-size="10.6" fill="#2a2a2a">88 000</text>
<line x1="327.00" y1="860.2" x2="327.00" y2="872.2" stroke="#222" stroke-width="1.5"/>
<text x="327.00" y="882" text-anchor="middle" font-size="10.6" fill="#2a2a2a">104 000</text>
<line x1="381.40" y1="860.2" x2="381.40" y2="872.2" stroke="#222" stroke-width="1.5"/>
<text x="381.40" y="882" text-anchor="middle" font-size="10.6" fill="#2a2a2a">120 000</text>
<line x1="435.80" y1="860.2" x2="435.80" y2="872.2" stroke="#222" stroke-width="1.5"/>
<text x="435.80" y="882" text-anchor="middle" font-size="10.6" fill="#2a2a2a">136 000</text>
<line x1="490.20" y1="860.2" x2="490.20" y2="872.2" stroke="#222" stroke-width="1.5"/>
<text x="490.20" y="882" text-anchor="middle" font-size="10.6" fill="#2a2a2a">152 000</text>
<line x1="544.60" y1="860.2" x2="544.60" y2="872.2" stroke="#222" stroke-width="1.5"/>
<text x="544.60" y="882" text-anchor="middle" font-size="10.6" fill="#2a2a2a">168 000</text>
<line x1="599.00" y1="860.2" x2="599.00" y2="872.2" stroke="#222" stroke-width="1.5"/>
<text x="599.00" y="882" text-anchor="middle" font-size="10.6" fill="#2a2a2a">184 000</text>
<text x="99.5" y="510" font-size="13" fill="#222">P/L</text>
<line x1="369.98" y1="513" x2="369.98" y2="865.2" stroke="#6e6e6e" stroke-width="1.6"/>
<text x="357" y="507.5" font-size="10.9" fill="#222">116640</text>
<text x="0" y="0" transform="translate(506,549) scale(0.86,1)" font-size="37" font-weight="bold" font-style="italic" fill="#c6cec8" stroke="#c6cec8" stroke-width="0.9">option.ru</text>
<polyline fill="none" stroke="#3d5cff" stroke-width="2.6" stroke-linejoin="round" points="109.40,533.57 364.40,533.57 372.90,845.83 381.40,845.83 389.90,533.57 652.70,533.57"/>
<polyline fill="none" stroke="#ff2424" stroke-width="1.2" points="109.40,533.37 116.20,533.37 123.00,533.37 129.80,533.37 136.60,533.37 143.40,533.37 150.20,533.37 157.00,533.37 163.80,533.37 170.60,533.37 177.40,533.37 184.20,533.37 191.00,533.37 197.80,533.37 204.60,533.37 211.40,533.37 218.20,533.37 225.00,533.37 231.80,533.37 238.60,533.37 245.40,533.37 252.20,533.37 259.00,533.37 265.80,533.37 272.60,533.37 279.40,533.37 286.20,533.37 293.00,533.37 299.80,533.37 306.60,533.37 313.40,533.37 320.20,533.37 327.00,533.37 333.80,533.38 334.14,533.38 334.48,533.38 334.82,533.38 335.16,533.38 335.50,533.39 335.84,533.39 336.18,533.39 336.52,533.40 336.86,533.40 337.20,533.40 337.54,533.41 337.88,533.42 338.22,533.42 338.56,533.43 338.90,533.44 339.24,533.46 339.58,533.47 339.92,533.49 340.26,533.51 340.60,533.53 340.94,533.55 341.28,533.58 341.62,533.61 341.96,533.65 342.30,533.69 342.64,533.74 342.98,533.79 343.32,533.85 343.66,533.92 344.00,534.00 344.34,534.09 344.68,534.19 345.02,534.30 345.36,534.42 345.70,534.56 346.04,534.71 346.38,534.89 346.72,535.08 347.06,535.29 347.40,535.53 347.74,535.79 348.08,536.07 348.42,536.39 348.76,536.74 349.10,537.12 349.44,537.54 349.78,538.00 350.12,538.50 350.46,539.05 350.80,539.65 351.14,540.29 351.48,541.00 351.82,541.76 352.16,542.58 352.50,543.47 352.84,544.43 353.18,545.46 353.52,546.57 353.86,547.76 354.20,549.03 354.54,550.39 354.88,551.84 355.22,553.39 355.56,555.03 355.90,556.78 356.24,558.62 356.58,560.58 356.92,562.65 357.26,564.82 357.60,567.12 357.94,569.53 358.28,572.05 358.62,574.70 358.96,577.46 359.30,580.35 359.64,583.36 359.98,586.49 360.32,589.74 360.66,593.10 361.00,596.59 361.34,600.18 361.68,603.89 362.02,607.71 362.36,611.63 362.70,615.65 363.04,619.76 363.38,623.97 363.72,628.26 364.06,632.62 364.40,637.05 364.74,641.55 365.08,646.10 365.42,650.69 365.76,655.32 366.10,659.98 366.44,664.65 366.78,669.33 367.12,674.01 367.46,678.67 367.80,683.30 368.14,687.90 368.48,692.46 368.82,696.95 369.16,701.37 369.50,705.71 369.84,709.96 370.18,714.11 370.52,718.13 370.86,722.03 371.20,725.80 371.54,729.42 371.88,732.88 372.22,736.17 372.56,739.28 372.90,742.21 373.24,744.95 373.58,747.49 373.92,749.82 374.26,751.93 374.60,753.82 374.94,755.49 375.28,756.92 375.62,758.12 375.96,759.09 376.30,759.81 376.64,760.29 376.98,760.53 377.32,760.52 377.66,760.28 378.00,759.79 378.34,759.06 378.68,758.10 379.02,756.90 379.36,755.47 379.70,753.82 380.04,751.95 380.38,749.87 380.72,747.58 381.06,745.10 381.40,742.42 381.74,739.55 382.08,736.52 382.42,733.31 382.76,729.95 383.10,726.44 383.44,722.80 383.78,719.03 384.12,715.14 384.46,711.15 384.80,707.06 385.14,702.88 385.48,698.63 385.82,694.32 386.16,689.95 386.50,685.55 386.84,681.11 387.18,676.64 387.52,672.17 387.86,667.69 388.20,663.22 388.54,658.76 388.88,654.33 389.22,649.93 389.56,645.58 389.90,641.27 390.24,637.01 390.58,632.82 390.92,628.69 391.26,624.64 391.60,620.67 391.94,616.78 392.28,612.98 392.62,609.27 392.96,605.65 393.30,602.14 393.64,598.72 393.98,595.41 394.32,592.20 394.66,589.10 395.00,586.11 395.34,583.22 395.68,580.44 396.02,577.77 396.36,575.20 396.70,572.74 397.04,570.39 397.38,568.14 397.72,565.99 398.06,563.94 398.40,561.99 398.74,560.13 399.08,558.37 399.42,556.70 399.76,555.11 400.10,553.62 400.44,552.20 400.78,550.87 401.12,549.61 401.46,548.43 401.80,547.31 402.14,546.27 402.48,545.29 402.82,544.38 403.16,543.52 403.50,542.72 403.84,541.97 404.18,541.28 404.52,540.63 404.86,540.03 405.20,539.47 405.54,538.96 405.88,538.48 406.22,538.04 406.56,537.63 406.90,537.25 407.24,536.90 407.58,536.58 407.92,536.29 408.26,536.02 408.60,535.77 408.94,535.55 409.28,535.34 409.62,535.15 409.96,534.98 410.30,534.82 410.64,534.67 410.98,534.54 411.32,534.43 411.66,534.32 412.00,534.22 412.34,534.13 412.68,534.05 413.02,533.98 413.36,533.92 413.70,533.86 414.04,533.80 414.38,533.76 414.72,533.71 415.06,533.68 415.40,533.64 422.20,533.39 429.00,533.37 435.80,533.37 442.60,533.37 449.40,533.37 456.20,533.37 463.00,533.37 469.80,533.37 476.60,533.37 483.40,533.37 490.20,533.37 497.00,533.37 503.80,533.37 510.60,533.37 517.40,533.37 524.20,533.37 531.00,533.37 537.80,533.37 544.60,533.37 551.40,533.37 558.20,533.37 565.00,533.37 571.80,533.37 578.60,533.37 585.40,533.37 592.20,533.37 599.00,533.37 605.80,533.37 612.60,533.37 619.40,533.37 626.20,533.37 633.00,533.37 639.80,533.37 646.60,533.37 652.7,533.37"/>
</svg>
<div class="t" style="left:123.4px;top:587.21px;font-size:17px;line-height:20px;font-weight:bold;color:#111;-webkit-text-stroke:0.3px #111;letter-spacing:0.83px">медвежий кол/спред</div>
<div class="t" style="left:427.5px;top:578.61px;font-size:17px;line-height:20px;font-weight:bold;color:#111;-webkit-text-stroke:0.3px #111;letter-spacing:0.77px">медвежий рут/спред</div>
<div class="t" style="left:149px;top:745.11px;font-size:17px;line-height:20px;font-weight:bold;color:#111;-webkit-text-stroke:0.3px #111;letter-spacing:0.7px">по одному,</div>
<div class="t" style="left:149px;top:765.41px;font-size:17px;line-height:20px;font-weight:bold;color:#111;-webkit-text-stroke:0.3px #111;letter-spacing:0.41px">а вместе Кондор</div>
</body></html>
